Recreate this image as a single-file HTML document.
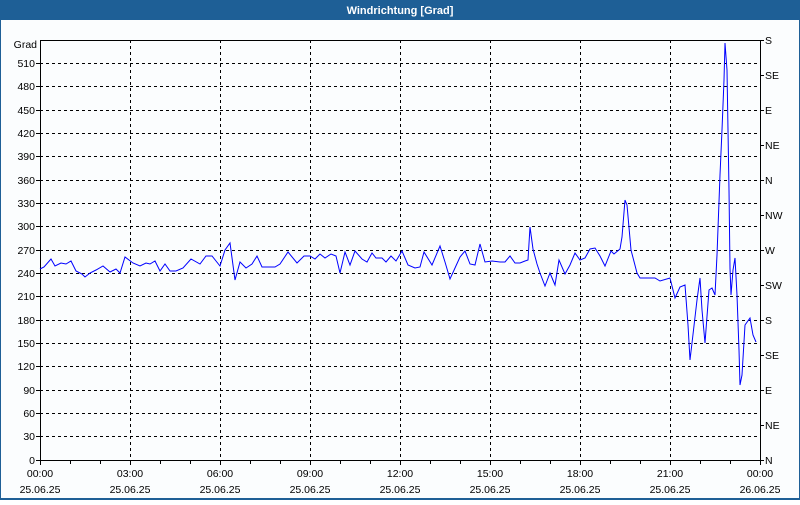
<!DOCTYPE html>
<html><head><meta charset="utf-8"><style>
body{margin:0;width:800px;height:500px;overflow:hidden;background:#fff;font-family:"Liberation Sans",sans-serif}
</style></head><body>
<svg width="800" height="500" xmlns="http://www.w3.org/2000/svg" font-family="Liberation Sans, sans-serif" font-size="10.5">
<rect x="0" y="0" width="800" height="500" fill="#fbfdfe"/>
<rect x="0" y="0" width="800" height="20" fill="#1e5f96"/>
<rect x="0" y="0" width="1" height="500" fill="#1e5f96"/>
<rect x="799" y="0" width="1" height="500" fill="#1e5f96"/>
<rect x="0" y="498" width="800" height="2" fill="#1e5f96"/>
<text x="400" y="14" fill="#fff" font-weight="bold" text-anchor="middle" font-size="11">Windrichtung [Grad]</text>
<g stroke="#000" stroke-dasharray="3,3" stroke-width="1">
<path d="M40 63.5H760M40 86.5H760M40 110.5H760M40 133.5H760M40 156.5H760M40 180.5H760M40 203.5H760M40 226.5H760M40 250.5H760M40 273.5H760M40 296.5H760M40 320.5H760M40 343.5H760M40 366.5H760M40 390.5H760M40 413.5H760M40 436.5H760"/>
<path d="M130.5 40V460M220.5 40V460M310.5 40V460M400.5 40V460M490.5 40V460M580.5 40V460M670.5 40V460"/>
</g>
<rect x="40.5" y="40.5" width="720" height="420" fill="none" stroke="#000"/>
<g stroke="#000">
<path d="M40.5 460V465M70.5 460V464M100.5 460V464M130.5 460V465M160.5 460V464M190.5 460V464M220.5 460V465M250.5 460V464M280.5 460V464M310.5 460V465M340.5 460V464M370.5 460V464M400.5 460V465M430.5 460V464M460.5 460V464M490.5 460V465M520.5 460V464M550.5 460V464M580.5 460V465M610.5 460V464M640.5 460V464M670.5 460V465M700.5 460V464M730.5 460V464M760.5 460V465"/>
<path d="M760 40.5h4M760 75.5h4M760 110.5h4M760 145.5h4M760 180.5h4M760 215.5h4M760 250.5h4M760 285.5h4M760 320.5h4M760 355.5h4M760 390.5h4M760 425.5h4M760 460.5h4"/>
<path d="M36 63.5h4M36 86.5h4M36 110.5h4M36 133.5h4M36 156.5h4M36 180.5h4M36 203.5h4M36 226.5h4M36 250.5h4M36 273.5h4M36 296.5h4M36 320.5h4M36 343.5h4M36 366.5h4M36 390.5h4M36 413.5h4M36 436.5h4M36 460.5h4"/>
</g>
<g text-anchor="end">
<text x="37" y="48">Grad</text>
<text x="35" y="67">510</text><text x="35" y="90">480</text><text x="35" y="114">450</text><text x="35" y="137">420</text><text x="35" y="160">390</text><text x="35" y="184">360</text><text x="35" y="207">330</text><text x="35" y="230">300</text><text x="35" y="254">270</text><text x="35" y="277">240</text><text x="35" y="300">210</text><text x="35" y="324">180</text><text x="35" y="347">150</text><text x="35" y="370">120</text><text x="35" y="394">90</text><text x="35" y="417">60</text><text x="35" y="440">30</text><text x="35" y="464">0</text>
</g>
<g text-anchor="start">
<text x="765" y="44">S</text><text x="765" y="79">SE</text><text x="765" y="114">E</text><text x="765" y="149">NE</text><text x="765" y="184">N</text><text x="765" y="219">NW</text><text x="765" y="254">W</text><text x="765" y="289">SW</text><text x="765" y="324">S</text><text x="765" y="359">SE</text><text x="765" y="394">E</text><text x="765" y="429">NE</text><text x="765" y="464">N</text>
</g>
<g text-anchor="middle">
<text x="40" y="477">00:00</text><text x="130" y="477">03:00</text><text x="220" y="477">06:00</text><text x="310" y="477">09:00</text><text x="400" y="477">12:00</text><text x="490" y="477">15:00</text><text x="580" y="477">18:00</text><text x="670" y="477">21:00</text><text x="760" y="477">00:00</text>
<text x="40" y="493">25.06.25</text><text x="130" y="493">25.06.25</text><text x="220" y="493">25.06.25</text><text x="310" y="493">25.06.25</text><text x="400" y="493">25.06.25</text><text x="490" y="493">25.06.25</text><text x="580" y="493">25.06.25</text><text x="670" y="493">25.06.25</text><text x="760" y="493">26.06.25</text>
</g>
<polyline fill="none" stroke="#0000ff" stroke-width="1" points="40,269 44,267 51,259 55,266 61,263 66,264 71,261 76,271 82,274 85,277 90,273 96,270 103,266 110,272 116,269 120,273 125,257 133,263 140,266 146,263 150,264 155,261 160,271 165,264 170,271 176,271 183,268 191,259 200,264 206,256 212,256 220,266 225,250 230,243 235,280 240,262 246,268 252,264 257,256 262,267 275,267 280,264 288,252 297,263 304,256 310,256 315,259 320,254 325,258 331,254 336,256 340,273 345,252 350,265 355,251 362,259 367,262 372,253 376,258 382,258 386,262 391,256 396,261 402,251 408,265 415,268 420,267 424,252 432,265 440,246 445,262 450,279 455,268 460,257 465,251 470,264 475,265 480,244 485,262 492,261 500,262 505,262 510,256 515,263 520,263 525,261 528,260 530,227 533,249 537,264 540,273 545,286 550,273 555,285 559,260 565,274 570,265 575,253 580,260 585,258 590,249 595,248 600,256 605,266 611,251 614,254 620,249 622,237 625,200 627,205 631,250 637,273 640,278 650,278 655,278 660,281 670,278 675,298 680,287 685,285 688,325 690,360 692,343 697,300 700,278 702,310 705,343 709,290 712,288 715,295 717,255 720,175 722,130 724,80 725,43 727,70 729,190 730,268 731,295 733,270 735,258 737,295 739,350 740,385 742,375 745,325 750,318 753,335 756,342"/>
</svg>
</body></html>
